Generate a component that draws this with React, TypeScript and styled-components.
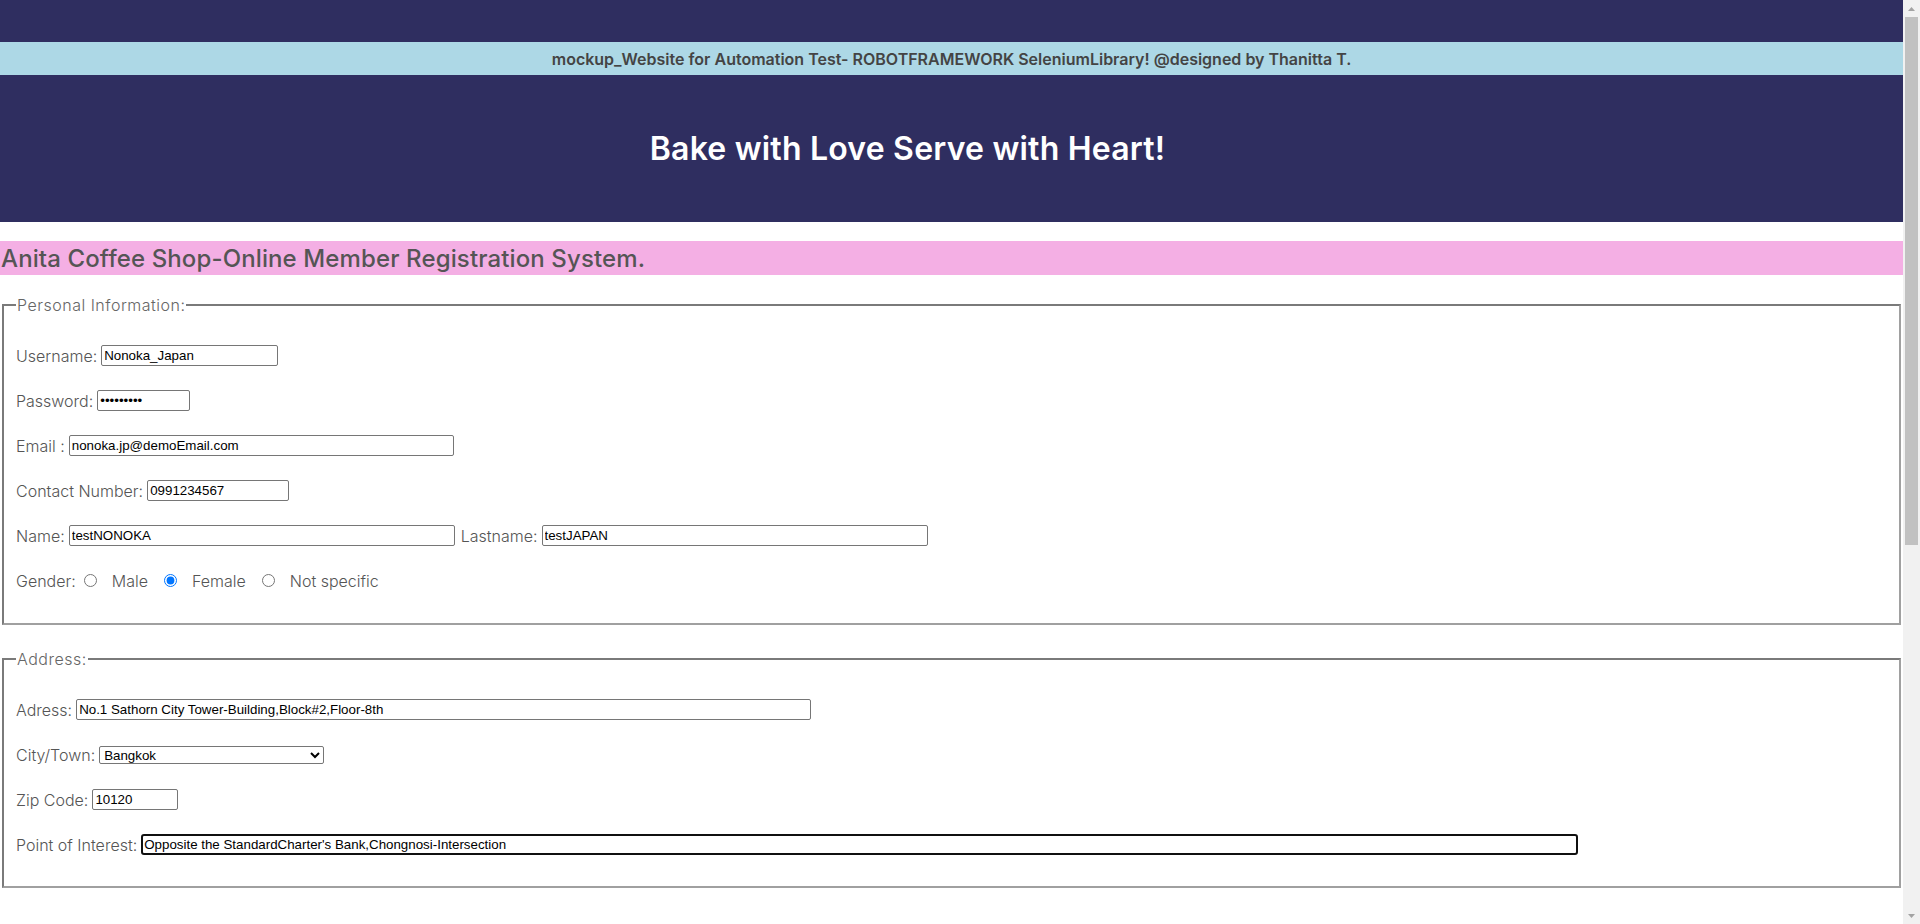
import React from "react";
import styled, { createGlobalStyle } from "styled-components";

const GlobalStyle = createGlobalStyle`
  html, body { margin: 0; padding: 0; background: #ffffff; }
  body { font-family: Inter, "Open Sans", sans-serif; }
`;

const Page = styled.div`
  width: calc(100vw - 17px);
  padding-bottom: 662px;
`;

const Header = styled.header`
  background: #2f2e60;
  padding-top: 42px;
`;

const Banner = styled.div`
  height: 33px;
  background: #add8e6;
  color: #444444;
  font-size: 16px;
  font-weight: 600;
  display: flex;
  align-items: center;
  justify-content: center;
`;

const Title = styled.h1`
  margin: 0;
  height: 147px;
  display: flex;
  align-items: center;
  justify-content: center;
  padding-right: 88px;
  color: #ffffff;
  font-size: 32px;
  font-weight: 600;
  letter-spacing: 0.2px;
`;

const PageHeading = styled.h2`
  margin: 19px 0 0;
  height: 34px;
  display: flex;
  align-items: center;
  background: #f4afe4;
  color: #555555;
  font-size: 24px;
  font-weight: 500;
  letter-spacing: 0.12px;
  padding-left: 1px;
`;

const Fieldset = styled.fieldset<{ $top: number; $padTop: number; $padBottom: number }>`
  margin: ${(p) => p.$top}px 2px 0;
  border-style: solid;
  border-width: 2px;
  border-color: #7a7a7a #a0a0a0 #a0a0a0 #7a7a7a;
  padding: ${(p) => p.$padTop}px 12px ${(p) => p.$padBottom}px;
  display: flex;
  flex-direction: column;
  gap: 24px;
`;

const Legend = styled.legend`
  color: #666666;
  font-size: 16px;
  font-weight: 300;
  letter-spacing: 0.5px;
  padding: 0 1px;
`;

const Row = styled.div`
  display: flex;
  align-items: center;
  height: 21px;
  color: #555555;
  font-size: 16px;
  font-weight: 300;
  white-space: pre;
`;

const Label = styled.label<{ $before?: number }>`
  margin-right: 4px;
  margin-left: ${(p) => p.$before ?? 0}px;
`;

const TextInput = styled.input<{ $w: number; $focused?: boolean }>`
  box-sizing: border-box;
  width: ${(p) => p.$w}px;
  height: 21px;
  font-family: "Liberation Sans", Arial, sans-serif;
  font-size: 13.33px;
  color: #000000;
  background: #ffffff;
  border: ${(p) => (p.$focused ? "2px solid #101010" : "1px solid #767676")};
  border-radius: ${(p) => (p.$focused ? "3px" : "2px")};
  padding: ${(p) => (p.$focused ? "0 1px" : "1px 2px")};
  margin: 0;
  outline: none;
`;

const Select = styled.select`
  box-sizing: border-box;
  width: 225px;
  height: 18px;
  font-family: "Liberation Sans", Arial, sans-serif;
  font-size: 13.33px;
  color: #000000;
  background: #ffffff;
  border: 1px solid #767676;
  border-radius: 2px;
  margin: 0;
  padding: 0;
`;

const Radio = styled.input<{ $first?: boolean }>`
  width: 13px;
  height: 13px;
  margin: 0 15px 0 ${(p) => (p.$first ? 4 : 16)}px;
  accent-color: #0075ff;
`;

const RadioText = styled.span``;

const Scrollbar = styled.div`
  position: fixed;
  top: 0;
  right: 0;
  width: 17px;
  height: 100vh;
  background: #f1f1f1;
  display: flex;
  flex-direction: column;
`;

const ScrollButton = styled.div`
  height: 17px;
  display: flex;
  align-items: center;
  justify-content: center;
  flex: none;
`;

const Track = styled.div`
  flex: 1;
  display: flex;
  flex-direction: column;
  padding: 0 2px;
`;

const Thumb = styled.div`
  height: 528px;
  background: #c1c1c1;
`;

const Arrow = ({ down }: { down?: boolean }) => (
  <svg width="7" height="4" viewBox="0 0 7 4">
    <polygon points={down ? "0,0 7,0 3.5,4" : "3.5,0 7,4 0,4"} fill="#a3a3a3" />
  </svg>
);

export default function App() {
  return (
    <>
      <GlobalStyle />
      <Page>
        <Header>
          <Banner>
            mockup_Website for Automation Test- ROBOTFRAMEWORK SeleniumLibrary! @designed by Thanitta T.
          </Banner>
          <Title>Bake with Love Serve with Heart!</Title>
        </Header>
        <PageHeading>Anita Coffee Shop-Online Member Registration System.</PageHeading>
        <form onSubmit={(e) => e.preventDefault()}>
          <Fieldset $top={20} $padTop={30} $padBottom={32}>
            <Legend>Personal Information:</Legend>
            <Row>
              <Label>Username:</Label>
              <TextInput $w={177} defaultValue="Nonoka_Japan" />
            </Row>
            <Row>
              <Label>Password:</Label>
              <TextInput $w={93} type="password" defaultValue="123456789" />
            </Row>
            <Row>
              <Label>Email :</Label>
              <TextInput $w={385} defaultValue="nonoka.jp@demoEmail.com" />
            </Row>
            <Row>
              <Label>Contact Number:</Label>
              <TextInput $w={142} defaultValue="0991234567" />
            </Row>
            <Row>
              <Label>Name:</Label>
              <TextInput $w={386} defaultValue="testNONOKA" />
              <Label $before={6}>Lastname:</Label>
              <TextInput $w={386} defaultValue="testJAPAN" />
            </Row>
            <Row>
              <Label>Gender:</Label>
              <Radio $first type="radio" name="gender" value="male" />
              <RadioText>Male</RadioText>
              <Radio type="radio" name="gender" value="female" defaultChecked />
              <RadioText>Female</RadioText>
              <Radio type="radio" name="gender" value="none" />
              <RadioText>Not specific</RadioText>
            </Row>
          </Fieldset>
          <Fieldset $top={24} $padTop={30} $padBottom={31}>
            <Legend>Address:</Legend>
            <Row>
              <Label>Adress:</Label>
              <TextInput $w={735} defaultValue="No.1 Sathorn City Tower-Building,Block#2,Floor-8th" />
            </Row>
            <Row>
              <Label>City/Town:</Label>
              <Select defaultValue="Bangkok">
                <option>Bangkok</option>
                <option>Chiang Mai</option>
                <option>Phuket</option>
              </Select>
            </Row>
            <Row>
              <Label>Zip Code:</Label>
              <TextInput $w={86} defaultValue="10120" />
            </Row>
            <Row>
              <Label>Point of Interest:</Label>
              <TextInput $w={1437} $focused defaultValue="Opposite the StandardCharter's Bank,Chongnosi-Intersection" />
            </Row>
          </Fieldset>
        </form>
      </Page>
      <Scrollbar aria-hidden="true">
        <ScrollButton><Arrow /></ScrollButton>
        <Track><Thumb /></Track>
        <ScrollButton><Arrow down /></ScrollButton>
      </Scrollbar>
    </>
  );
}
